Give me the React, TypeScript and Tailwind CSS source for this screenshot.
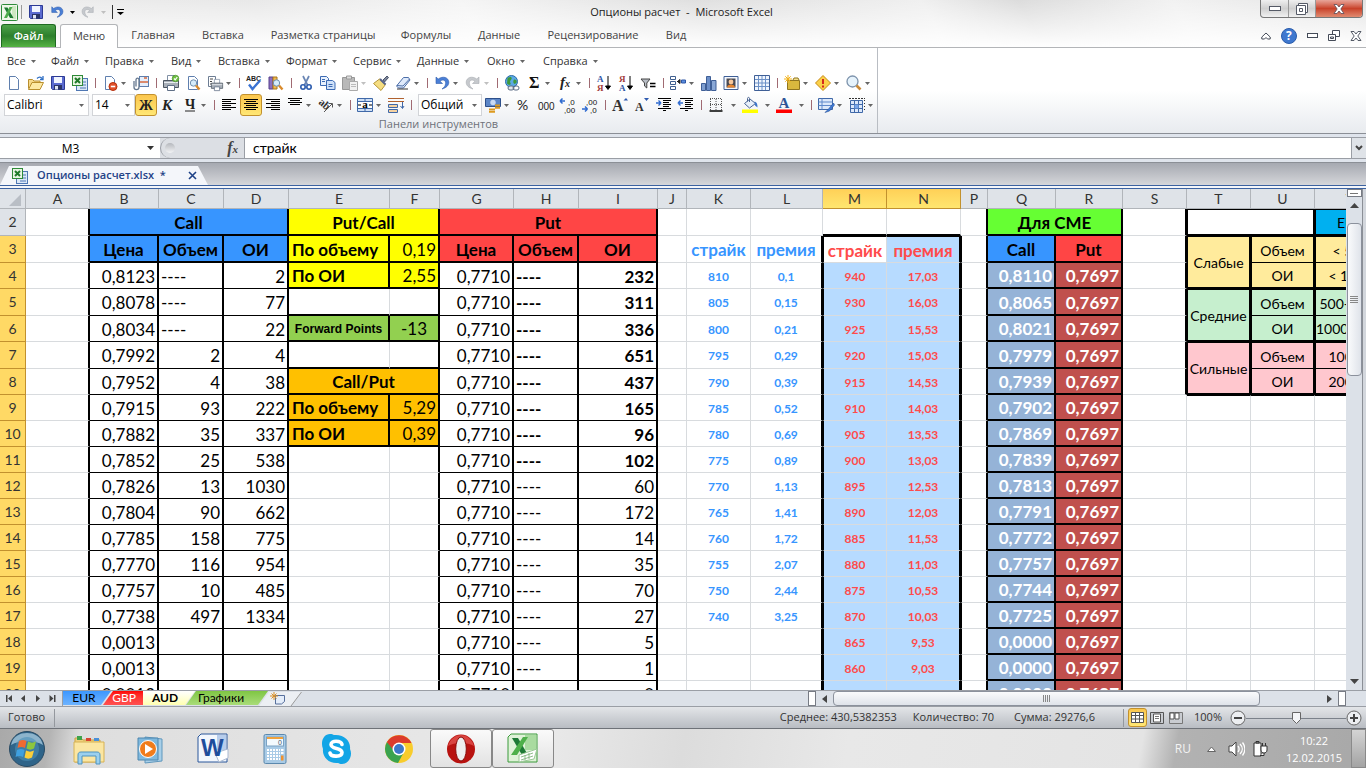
import React from 'react';
import clsx from 'clsx';

type Tool = {
  name?: string;
  arrow?: 'narrow' | 'wide';
  active?: boolean;
  sep?: boolean;
  faded?: boolean;
};

const doc = <path d="M3.5 1.5h6l3 3v10h-9z" fill="#fdfeff" stroke="#5f7fae" />;
const lens = (
  <>
    <circle cx="8.5" cy="8" r="3.2" fill="#d5ecfb" stroke="#6f8fae" />
    <path d="M11 10.5l3.5 4" stroke="#d98a2b" strokeWidth="2.4" />
  </>
);
const printer = (
  <>
    <path d="M4.5 6V.5h7V6" fill="#fff" stroke="#8090a5" />
    <path d="M.5 5.500h15v7H.5z" fill="#a9b0b8" stroke="#4d5661" />
    <path d="M1 7.500h14" stroke="#e9edf1" />
    <path d="M4.5 10.500h7v5h-7z" fill="#fff" stroke="#5f6f86" />
  </>
);
const excelMark = (
  <>
    <rect x="4.500" y="3.500" width="11" height="12" fill="#dbe8f8" stroke="#4f77b3" />
    <path d="M10 7h4M10 10h4M8 13h6" stroke="#4f77b3" />
    <rect x="0.500" y="0.500" width="10" height="10" fill="#e9f5e4" stroke="#2f8a38" />
    <path d="M3 3l5 5M8 3L3 8" stroke="#1f7a2a" strokeWidth="2" />
  </>
);
const floppy = (
  <>
    <path d="M1.500 1.500h13v13h-12l-1-1z" fill="#5b6bd0" stroke="#2c3a94" />
    <path d="M4 2h8v6H4z" fill="#f1f5ff" />
    <path d="M4 10h8v4.500H4z" fill="#2a3466" />
    <path d="M5 11h3v3.500H5z" fill="#dfe5f5" />
  </>
);
const undo = (
  <path d="M2 2v6.500h6.500L6 6.300C8.500 4 12 5 11.600 8.500c-.2 2.500-1.600 4-3.600 5.500 4-1 7-3.500 6.800-7C14.500 2.500 9 .5 4.200 4z" fill="#4a7fd6" stroke="#2f5cab" strokeWidth=".6" />
);
const redo = (
  <path d="M14 2v6.500H7.500L10 6.300C7.500 4 4 5 4.400 8.500c.2 2.500 1.600 4 3.600 5.500-4-1-7-3.500-6.800-7C1.500 2.500 7 .5 11.800 4z" fill="#c6c9cd" stroke="#a9adb2" strokeWidth=".6" />
);
const sheetLines = <path d="M1 4.500h14M1 8h14M1 11.500h14M4.500 1v14M8 1v14M11.500 1v14" stroke="#6d91c7" />;

const icons: Record<string, React.ReactNode> = {
  'Создать': doc,
  'Открыть': (
    <>
      <path d="M.5 13.500v-9h4l1.500 1.500h6v2" fill="#f6d98a" stroke="#b98f2e" />
      <path d="M.5 14.500l3.500-7h11.500l-3.500 7z" fill="#fde9a4" stroke="#b98f2e" />
      <path d="M9 3.500c2-2 4-1.500 5 0M15 1v3.500h-3" fill="none" stroke="#2f6fc4" strokeWidth="1.300" />
    </>
  ),
  'Сохранить': floppy,
  'Книга Excel': excelMark,
  'Удалить лист': (
    <>
      {doc}
      <circle cx="11" cy="11.500" r="4" fill="#e2512b" stroke="#b5300f" />
      <path d="M8.800 11.500h4.400" stroke="#fff" strokeWidth="1.600" />
    </>
  ),
  'Вложение': (
    <>
      <rect x="6.500" y="1.500" width="9" height="10" fill="#e5eefb" stroke="#5f7fae" />
      <path d="M7 7h8M11 3h3" stroke="#d86a3f" strokeWidth="1.500" />
      <path d="M1 6v6c0 3.500 5 3.500 5 0V5c0-2.500-3-2.500-3 0v6.500" fill="none" stroke="#66788f" strokeWidth="1.300" />
    </>
  ),
  'Быстрая печать': (
    <>
      {printer}
      <circle cx="12.500" cy="3.500" r="3.300" fill="#6fbe44" stroke="#3c8a1d" strokeWidth=".6" />
      <path d="M11 3.500l1.200 1.300L14.300 2" fill="none" stroke="#fff" strokeWidth="1.200" />
    </>
  ),
  'Предварительный просмотр': (
    <>
      {doc}
      {lens}
    </>
  ),
  'Параметры печати': (
    <>
      <path d="M1.500 1.500h7v10h-7z" fill="#fff" stroke="#6d7d93" />
      <path d="M3 4h3M3 6.500h2M3 9h2" stroke="#444" />
      <g transform="translate(4 4) scale(.75)">{printer}</g>
    </>
  ),
  'Орфография': (
    <>
      <text x="0" y="5.500" fontSize="7" fontWeight="bold" fontFamily="Liberation Sans, sans-serif" fill="#222">ABC</text>
      <path d="M3 9.500l3.500 4.500L14 5.500" fill="none" stroke="#3a72d2" strokeWidth="2.400" />
    </>
  ),
  'Справочники': (
    <>
      <path d="M1 2h4v12H1z" fill="#8c6fc0" stroke="#55408c" />
      <path d="M5 2h4v12H5z" fill="#f1b74b" stroke="#a8771c" />
      {lens}
    </>
  ),
  'Вырезать': (
    <>
      <path d="M5 1l4.500 9M11 1L6.500 10" stroke="#6a86b5" strokeWidth="1.700" />
      <circle cx="5" cy="12" r="2.200" fill="none" stroke="#2c5cae" strokeWidth="1.600" />
      <circle cx="11" cy="12" r="2.200" fill="none" stroke="#2c5cae" strokeWidth="1.600" />
    </>
  ),
  'Копировать': (
    <>
      <path d="M.5 1.500h6l2 2v7h-8z" fill="#e8f1fd" stroke="#3c6ab3" />
      <path d="M6.500 5.500h6l2.500 2v7H6.500z" fill="#cfe1f9" stroke="#3c6ab3" />
      <path d="M8.500 9.500h4M8.500 11.500h4M2 4.500h3M2 6.500h3" stroke="#3c6ab3" />
    </>
  ),
  'Вставить': (
    <>
      <path d="M.5 2.500h12v12H.5z" fill="#b9b9b9" stroke="#999" />
      <path d="M4.500 1h5v3h-5z" fill="#ddd" stroke="#999" />
      <path d="M7.500 6.500h8v9h-8z" fill="#f2f2f2" stroke="#aaa" />
      <path d="M9 9.500h5M9 11.500h5" stroke="#bbb" />
    </>
  ),
  'Формат по образцу': (
    <>
      <path d="M10 5l4-4 1.500 1.500-4 4.500z" fill="#7d869b" stroke="#4b546a" />
      <path d="M.5 8.500l6-4.500 6 5.500-4.500 6z" fill="#f5dd80" stroke="#b5953a" />
      <path d="M7 4l5.500 5.500" stroke="#57648a" strokeWidth="2" />
    </>
  ),
  'Очистить': (
    <>
      <path d="M1.500 11l7-8.500h5l1.500 2.500-6.500 8h-5z" fill="#dfeafb" stroke="#4c6ea8" />
      <path d="M2 14h11" stroke="#333" />
      <path d="M2 10.500l6 .5 6.500-7" fill="none" stroke="#4c6ea8" />
    </>
  ),
  'Отменить': undo,
  'Вернуть': redo,
  'Гиперссылка': (
    <>
      <circle cx="7.500" cy="6.500" r="6" fill="#5aa9e6" stroke="#2b6ca6" />
      <path d="M3.500 3c2.500-2 5-1 4 1s-2 2-1 4-2 2.500-3.500.500zM10 4.500c3-.5 3.500 3 1.500 4s-3-2-1.500-4z" fill="#3f9a3a" />
      <rect x="4" y="11" width="6" height="4" rx="2" fill="#dfe6ee" stroke="#5b6d85" />
      <rect x="9" y="11" width="6" height="4" rx="2" fill="none" stroke="#5b6d85" />
    </>
  ),
  'Автосумма': <text x="3" y="13" fontSize="16" fontWeight="bold" fontFamily="Liberation Serif, serif" fill="#111">Σ</text>,
  'Функция': (
    <text y="12" fontSize="15" fontStyle="italic" fontWeight="bold" fontFamily="Liberation Serif, serif" fill="#222">
      <tspan x="3">f</tspan>
      <tspan x="8" fontSize="10">x</tspan>
    </text>
  ),
  'Сортировка по возрастанию': (
    <>
      <text x="1" y="7" fontSize="9" fontWeight="bold" fontFamily="Liberation Serif, serif" fill="#2d55a5">А</text>
      <text x="1" y="15.500" fontSize="9" fontWeight="bold" fontFamily="Liberation Serif, serif" fill="#a23b3b">Я</text>
      <path d="M12 1v12M9.500 11l2.500 3.500 2.500-3.500z" stroke="#000" fill="#000" />
    </>
  ),
  'Сортировка по убыванию': (
    <>
      <text x="1" y="7" fontSize="9" fontWeight="bold" fontFamily="Liberation Serif, serif" fill="#a23b3b">Я</text>
      <text x="1" y="15.500" fontSize="9" fontWeight="bold" fontFamily="Liberation Serif, serif" fill="#2d55a5">А</text>
      <path d="M12 1v12M9.500 11l2.500 3.500 2.500-3.500z" stroke="#000" fill="#000" />
    </>
  ),
  'Фильтр': (
    <>
      <path d="M1 4h9L6.800 8v5L4.500 11V8z" fill="#b7bcc4" stroke="#444" />
      <path d="M10 8.500h5.500M10 11.500h5.500" stroke="#000" strokeWidth="1.600" />
    </>
  ),
  'Зависимости': (
    <>
      <path d="M.5 1.500h5v3h-5zM.5 6.500h5v3h-5zM.5 11.500h5v3h-5z" fill="#fff" stroke="#3f5f8f" />
      <path d="M7 6.500h3M10 4.500v4L7.500 6.500z" stroke="#222" fill="#222" />
      <path d="M11.500 5h4v3h-4z" fill="#5a8ede" stroke="#2d55a5" />
    </>
  ),
  'Диаграмма': (
    <>
      <path d="M.5 8.500h4v7h-4z" fill="#7f9fd0" stroke="#3f5f96" />
      <path d="M5.500 1.500h4v14h-4z" fill="#6c8fc8" stroke="#3f5f96" />
      <path d="M10.500 5.500h4.500v10h-4.500z" fill="#8aa8d6" stroke="#3f5f96" />
    </>
  ),
  'Рисунок': (
    <>
      <path d="M1 1.500h14v13H1z" fill="#f5f8fd" stroke="#3f5f96" />
      <path d="M3.500 3.500h9v9h-9z" fill="#4a4a52" />
      <circle cx="8" cy="7" r="2.400" fill="#f7c79b" />
      <path d="M4 12.500c0-4 8-4 8 0z" fill="#e8842c" />
    </>
  ),
  'Таблица': (
    <>
      <path d="M.5 .5h15v15H.5z" fill="#f1f6fd" stroke="#3f5f96" />
      {sheetLines}
    </>
  ),
  'Создать папку': (
    <>
      <path d="M3.500 5.500h12v9h-12z" fill="#d9b83e" stroke="#8f7520" />
      <path d="M9 5l1-2h4l1 2" fill="#f3e08b" stroke="#8f7520" />
      <path d="M4 0v8M0 4h8M1.300 1.300l5.400 5.400M6.700 1.300L1.300 6.700" stroke="#f2b21b" />
    </>
  ),
  'Ошибки': (
    <>
      <path d="M8 .5L15.500 8 8 15.500.5 8z" fill="#fbd14a" stroke="#c78913" />
      <path d="M8 4v5M8 10.500v2" stroke="#d42a1e" strokeWidth="2" />
    </>
  ),
  'Масштаб': (
    <>
      <circle cx="6.500" cy="6.500" r="5.500" fill="#e6f3fc" stroke="#7d93ac" strokeWidth="1.300" />
      <path d="M10.500 10.500l4 4" stroke="#c98b3a" strokeWidth="2.600" />
    </>
  ),
  'Полужирный': <text x="1" y="13" fontSize="14" fontWeight="bold" fontFamily="Liberation Serif, serif" fill="#222">Ж</text>,
  'Курсив': <text x="2" y="13" fontSize="15" fontWeight="bold" fontStyle="italic" fontFamily="Liberation Serif, serif" fill="#222">К</text>,
  'Подчеркнутый': (
    <>
      <text x="3" y="11.500" fontSize="14" fontWeight="bold" fontFamily="Liberation Serif, serif" fill="#222">Ч</text>
      <path d="M3 14h10" stroke="#222" />
    </>
  ),
  'По левому краю': <path d="M1 2.500h14M1 4.500h9M1 6.500h14M1 8.500h9M1 10.500h14M1 12.500h9" stroke="#000" />,
  'По центру': <path d="M1 2.500h14M3 4.500h10M1 6.500h14M3 8.500h10M1 10.500h14M3 12.500h10" stroke="#000" />,
  'По правому краю': <path d="M1 2.500h14M6 4.500h9M1 6.500h14M6 8.500h9M1 10.500h14M6 12.500h9" stroke="#000" />,
  'По верхнему краю': <path d="M1 1.500h14M3 3.500h10M1 5.500h14M3 7.500h10" stroke="#000" />,
  'Ориентация': (
    <>
      <text x="0" y="10" fontSize="11" fontWeight="bold" fontFamily="Liberation Serif, serif" fill="#333" transform="rotate(40 5 8)">ab</text>
      <path d="M6 15l8-8M14.500 6.500v4M14.500 6.500h-4" stroke="#555" fill="none" />
    </>
  ),
  'Объединить': (
    <>
      <path d="M.5 1.500h15v13H.5z" fill="#cfe0f6" stroke="#3f68a8" />
      <path d="M.5 4.500h15M.5 11.500h15M8 1.500v3M8 11.500v3" stroke="#3f68a8" />
      <path d="M1 5h14v6H1z" fill="#fff" />
      <text x="5.200" y="11" fontSize="11" fontWeight="bold" fontFamily="Liberation Serif, serif" fill="#000">a</text>
      <path d="M1 8h3M12 8h3" stroke="#000" />
    </>
  ),
  'Перенос текста': (
    <>
      <path d="M0 1.500h16M0 4.500h16" stroke="#b0612e" />
      <path d="M.5 7.500h9v3h-9zM.5 12.500h9v3h-9z" fill="#f5d2a2" stroke="#3f68a8" />
      <path d="M14.500 5v6M12.500 9l2 2.500 1.500-2.500" stroke="#3f68a8" fill="none" />
    </>
  ),
  'Денежный формат': (
    <>
      <path d="M.5 1.500h15v8H.5z" fill="#5c86c7" stroke="#2d4f8a" />
      <circle cx="8" cy="5.500" r="2.700" fill="#c8daf3" />
      <path d="M4 12.500h6M4 14.800h6M10 8.500h5M10 10.800h5" stroke="#dd9a1f" strokeWidth="1.800" />
    </>
  ),
  'Процентный формат': <text x="1" y="13" fontSize="14" fontFamily="Lato, sans-serif" fill="#222">%</text>,
  'Формат с разделителями': <text x="0" y="13" fontSize="10" fontFamily="Liberation Sans, sans-serif" fill="#222">000</text>,
  'Увеличить разрядность': (
    <>
      <path d="M0 4h5M0 4l2.500-2.500M0 4l2.500 2.500" stroke="#2f6bd0" strokeWidth="1.500" />
      <text x="8" y="7.500" fontSize="8" fontFamily="Liberation Sans, sans-serif" fill="#111">,0</text>
      <text x="4" y="15.500" fontSize="8" fontFamily="Liberation Sans, sans-serif" fill="#111">,00</text>
    </>
  ),
  'Уменьшить разрядность': (
    <>
      <text x="4" y="7.500" fontSize="8" fontFamily="Liberation Sans, sans-serif" fill="#111">,00</text>
      <path d="M0 12h5M5.500 12L3 9.500M5.500 12L3 14.500" stroke="#2f6bd0" strokeWidth="1.500" />
      <text x="8" y="15.500" fontSize="8" fontFamily="Liberation Sans, sans-serif" fill="#111">,0</text>
    </>
  ),
  'Увеличить шрифт': (
    <>
      <text x="0" y="14" fontSize="16" fontWeight="bold" fontFamily="Liberation Serif, serif" fill="#333">A</text>
      <path d="M11.500 3.500L14 1l2 2.500z" fill="#2f5bb0" />
    </>
  ),
  'Уменьшить шрифт': (
    <>
      <text x="1" y="14" fontSize="12" fontWeight="bold" fontFamily="Liberation Serif, serif" fill="#333">A</text>
      <path d="M10 1h5l-2.500 3z" fill="#2f5bb0" />
    </>
  ),
  'Увеличить отступ': (
    <>
      <path d="M2 1.500h13M7 3.500h8M7 5.500h6M7 7.500h8M7 9.500h6M2 11.500h13M7 13.500h3" stroke="#000" />
      <path d="M0 6h4M5 6L2.500 3.500M5 6L2.500 8.500" stroke="#2f6bd0" strokeWidth="1.400" />
    </>
  ),
  'Уменьшить отступ': (
    <>
      <path d="M2 1.500h13M7 3.500h8M7 5.500h6M7 7.500h8M7 9.500h6M2 11.500h13M7 13.500h3" stroke="#000" />
      <path d="M1 6h4M0 6l2.500-2.500M0 6l2.500 2.500" stroke="#2f6bd0" strokeWidth="1.400" />
    </>
  ),
  'Границы': (
    <>
      <path d="M2 1.500h12M2 7.500h12M2.500 2v11M8 2v11M13.500 2v11" stroke="#555" strokeDasharray="1 1" />
      <path d="M1.500 14h13" stroke="#000" strokeWidth="1.500" />
    </>
  ),
  'Цвет заливки': (
    <>
      <path d="M2.500 6.500L8 2l5.500 4.500-6 4.500z" fill="#e8f0fa" stroke="#4a6594" />
      <path d="M7.500 5V1.500c0-1.500-2-1.500-2 0v3" fill="none" stroke="#4a6594" />
      <path d="M12.500 4.500c2.500.5 3 3 3 6l-2.500-2z" fill="#3f76c9" />
      <path d="M0 12.500h16v3.500H0z" fill="#ff0" />
    </>
  ),
  'Цвет текста': (
    <>
      <text x="2.500" y="11" fontSize="15" fontWeight="bold" fontFamily="Liberation Serif, serif" fill="#2f5597">A</text>
      <path d="M0 12.500h16v3.500H0z" fill="#f00" />
    </>
  ),
  'Форматировать как таблицу': (
    <>
      <path d="M.5 1.500h14v11H.5z" fill="#dce8fa" stroke="#3f68a8" />
      <path d="M.5 5h14M.5 8.500h14M4 1.500v11" stroke="#5e89cb" />
      <path d="M15.500 6l-5 6-3.500 3.500 4.500-1.500 5-6z" fill="#3f7bd6" stroke="#27509a" strokeWidth=".6" />
    </>
  ),
  'Ячейки': (
    <>
      <path d="M1.500 3.500h12v12h-12z" fill="#dce8fa" stroke="#3f68a8" />
      <path d="M1.500 7.500h12M1.500 11.500h12M5.500 3.500v12M9.500 3.500v12" stroke="#3f68a8" />
      <path d="M5.500 7.500h4v4h-4z" fill="#7aa7ea" />
      <path d="M0 1.500h16" stroke="#333" strokeDasharray="2 1" />
      <path d="M15.500 3v11" stroke="#333" strokeDasharray="1 2" />
    </>
  ),
};

const standardTools: Tool[] = [
  { name: 'Создать' }, { name: 'Открыть' }, { name: 'Сохранить' }, { name: 'Книга Excel' }, { sep: true },
  { name: 'Удалить лист', arrow: 'narrow' }, { name: 'Вложение' }, { sep: true },
  { name: 'Быстрая печать' }, { name: 'Предварительный просмотр' }, { name: 'Параметры печати', arrow: 'narrow' }, { sep: true },
  { name: 'Орфография' }, { name: 'Справочники' }, { sep: true },
  { name: 'Вырезать' }, { name: 'Копировать' }, { name: 'Вставить', arrow: 'narrow', faded: true }, { name: 'Формат по образцу' },
  { name: 'Очистить', arrow: 'narrow' }, { sep: true },
  { name: 'Отменить', arrow: 'narrow' }, { name: 'Вернуть', arrow: 'narrow', faded: true }, { sep: true },
  { name: 'Гиперссылка' }, { name: 'Автосумма', arrow: 'narrow' }, { name: 'Функция', arrow: 'narrow' }, { sep: true },
  { name: 'Сортировка по возрастанию' }, { name: 'Сортировка по убыванию' }, { name: 'Фильтр' }, { sep: true },
  { name: 'Зависимости', arrow: 'narrow' }, { name: 'Диаграмма' }, { name: 'Рисунок', arrow: 'narrow' }, { name: 'Таблица' }, { sep: true },
  { name: 'Создать папку', arrow: 'narrow' }, { name: 'Ошибки', arrow: 'narrow' }, { name: 'Масштаб', arrow: 'narrow' },
];

const alignTools: Tool[] = [
  { name: 'Полужирный', active: true }, { name: 'Курсив' }, { name: 'Подчеркнутый', arrow: 'narrow' }, { sep: true },
  { name: 'По левому краю' }, { name: 'По центру', active: true }, { name: 'По правому краю' },
  { name: 'По верхнему краю', arrow: 'narrow' }, { name: 'Ориентация', arrow: 'narrow' }, { sep: true },
  { name: 'Объединить', arrow: 'narrow' }, { name: 'Перенос текста' }, { sep: true },
];

const numberTools: Tool[] = [
  { name: 'Денежный формат', arrow: 'narrow' }, { name: 'Процентный формат' }, { name: 'Формат с разделителями' },
  { name: 'Увеличить разрядность' }, { name: 'Уменьшить разрядность' }, { sep: true },
  { name: 'Увеличить шрифт' }, { name: 'Уменьшить шрифт' }, { name: 'Увеличить отступ' }, { name: 'Уменьшить отступ' }, { sep: true },
  { name: 'Границы', arrow: 'wide' }, { name: 'Цвет заливки', arrow: 'wide' }, { name: 'Цвет текста', arrow: 'wide' }, { sep: true },
  { name: 'Форматировать как таблицу', arrow: 'narrow' }, { name: 'Ячейки', arrow: 'narrow' },
];

const ribbonTabs = [
  { label: 'Главная', width: 'w-[70px]' },
  { label: 'Вставка', width: 'w-[70px]' },
  { label: 'Разметка страницы', width: 'w-[130px]' },
  { label: 'Формулы', width: 'w-[76px]' },
  { label: 'Данные', width: 'w-[70px]' },
  { label: 'Рецензирование', width: 'w-[118px]' },
  { label: 'Вид', width: 'w-[48px]' },
];

const menus = [
  { label: 'Все', width: 'w-[44px]' },
  { label: 'Файл', width: 'w-[54px]' },
  { label: 'Правка', width: 'w-[66px]' },
  { label: 'Вид', width: 'w-[47px]' },
  { label: 'Вставка', width: 'w-[68px]' },
  { label: 'Формат', width: 'w-[67px]' },
  { label: 'Сервис', width: 'w-[64px]' },
  { label: 'Данные', width: 'w-[70px]' },
  { label: 'Окно', width: 'w-[56px]' },
  { label: 'Справка', width: 'w-[64px]' },
];

const columns = [
  { name: 'A', width: 'w-[64px]' },
  { name: 'B', width: 'w-[69px]' },
  { name: 'C', width: 'w-[65px]' },
  { name: 'D', width: 'w-[65px]' },
  { name: 'E', width: 'w-[101px]' },
  { name: 'F', width: 'w-[50px]' },
  { name: 'G', width: 'w-[74px]' },
  { name: 'H', width: 'w-[65px]' },
  { name: 'I', width: 'w-[79px]' },
  { name: 'J', width: 'w-[29px]' },
  { name: 'K', width: 'w-[64px]' },
  { name: 'L', width: 'w-[72px]' },
  { name: 'M', width: 'w-[64px]', selected: true },
  { name: 'N', width: 'w-[74px]', selected: true },
  { name: 'P', width: 'w-[27px]' },
  { name: 'Q', width: 'w-[68px]' },
  { name: 'R', width: 'w-[67px]' },
  { name: 'S', width: 'w-[64px]' },
  { name: 'T', width: 'w-[64px]' },
  { name: 'U', width: 'w-[64px]' },
  { name: 'V', width: 'w-[72px]' },
];

// [row, B, C, D, I, K, L, M, N, Q]
const rows: [number, string, string, string, string, string, string, string, string, string][] = [
  [4, '0,8123', '----', '2', '232', '810', '0,1', '940', '17,03', '0,8110'],
  [5, '0,8078', '----', '77', '311', '805', '0,15', '930', '16,03', '0,8065'],
  [6, '0,8034', '----', '22', '336', '800', '0,21', '925', '15,53', '0,8021'],
  [7, '0,7992', '2', '4', '651', '795', '0,29', '920', '15,03', '0,7979'],
  [8, '0,7952', '4', '38', '437', '790', '0,39', '915', '14,53', '0,7939'],
  [9, '0,7915', '93', '222', '165', '785', '0,52', '910', '14,03', '0,7902'],
  [10, '0,7882', '35', '337', '96', '780', '0,69', '905', '13,53', '0,7869'],
  [11, '0,7852', '25', '538', '102', '775', '0,89', '900', '13,03', '0,7839'],
  [12, '0,7826', '13', '1030', '60', '770', '1,13', '895', '12,53', '0,7813'],
  [13, '0,7804', '90', '662', '172', '765', '1,41', '890', '12,03', '0,7791'],
  [14, '0,7785', '158', '775', '14', '760', '1,72', '885', '11,53', '0,7772'],
  [15, '0,7770', '116', '954', '35', '755', '2,07', '880', '11,03', '0,7757'],
  [16, '0,7757', '10', '485', '70', '750', '2,44', '875', '10,53', '0,7744'],
  [17, '0,7738', '497', '1334', '27', '740', '3,25', '870', '10,03', '0,7725'],
  [18, '0,0013', '', '', '5', '', '', '865', '9,53', '0,0000'],
  [19, '0,0013', '', '', '1', '', '', '860', '9,03', '0,0000'],
  [20, '0,0013', '', '', '0', '', '', '', '', '0,0000'],
];

const levels = [
  { title: 'Слабые', bg: 'bg-[#ffeb9c]', values: ['< 500', '< 1000'] },
  { title: 'Средние', bg: 'bg-[#c6efce]', values: ['500-1000', '1000-2000'] },
  { title: 'Сильные', bg: 'bg-[#ffc7ce]', values: ['1000 >', '2000 >'] },
];

const plain = 'border-r border-b border-[#d8dbde]';
const beforeTable = 'border-b border-r-2 border-b-[#d8dbde] border-r-black';
const boxed = 'border-r-2 border-b-2 border-black';
const figure = 'border-r-2 border-b border-black px-0.5';
const selected = 'bg-[#b7dbff] text-[#ff4b4b] text-center font-bold text-xs';

const Arrow = ({ faded }: { faded?: boolean }) => (
  <svg width="5" height="3" viewBox="0 0 5 3" className="shrink-0">
    <path d="M0 0h5L2.500 3z" fill={faded ? '#c0c0c0' : '#666'} />
  </svg>
);

const ToolRow = ({ tools }: { tools: Tool[] }) => (
  <>
    {tools.map((tool, i) =>
      tool.sep || !tool.name ? (
        <span key={i} className="flex w-2 shrink-0 justify-center">
          <span className="h-2.5 w-px bg-[#a06a72]" />
        </span>
      ) : (
        <button key={i} type="button" aria-label={tool.name} className="flex h-[22px] shrink-0 items-center">
          <span
            className={clsx(
              'flex h-[22px] w-[22px] items-center justify-center',
              tool.active && 'rounded-[3px] border border-[#c2912e] bg-gradient-to-b from-[#fbc64d] to-[#ffe774]',
            )}
          >
            <svg width="16" height="16" viewBox="0 0 16 16" fill="none" className="overflow-visible">{icons[tool.name]}</svg>
          </span>
          {tool.arrow && (
            <span className={clsx('flex items-center', tool.arrow === 'wide' ? 'w-3 justify-center' : 'w-[9px]')}>
              <Arrow faded={tool.faded} />
            </span>
          )}
        </button>
      ),
    )}
  </>
);

const Combo = ({ label, value, width }: { label: string; value: string; width: string }) => (
  <label className={clsx('relative flex h-[22px] shrink-0 items-center border border-[#d2d4d8] bg-white', width)}>
    <span className="sr-only">{label}</span>
    <select className="h-5 w-full appearance-none pl-0.5 text-xs leading-5 text-black" defaultValue={value}>
      <option>{value}</option>
    </select>
    <span className="pointer-events-none absolute right-1">
      <Arrow />
    </span>
  </label>
);

const ExcelLogo = () => (
  <svg width="17" height="17" viewBox="0 0 17 17">
    <rect x=".5" y=".5" width="16" height="16" rx="1" fill="#eef8e9" stroke="#2e8b3a" />
    <path d="M11 2h4v13h-4z" fill="#cfe8c4" />
    <path d="M3 3.500h3.500L12.500 14H9z" fill="#1d7a33" />
    <path d="M11.500 3h-3L3 14h3z" fill="#4dac4b" />
  </svg>
);

const TitleBar = () => (
  <header className="flex h-6 shrink-0 items-start">
    <div className="flex h-6 flex-1 items-center">
      <span className="ml-px"><ExcelLogo /></span>
      <span className="ml-[3px] h-3.5 w-px bg-[#9a9a9a]" />
      <button type="button" aria-label="Сохранить" className="ml-1.5">
        <svg width="16" height="16" viewBox="0 0 16 16">{floppy}</svg>
      </button>
      <button type="button" aria-label="Отменить" className="ml-1.5 flex items-center gap-1.5">
        <svg width="14" height="14" viewBox="0 0 16 16">{undo}</svg>
        <svg width="5" height="3" viewBox="0 0 5 3"><path d="M0 0h5L2.500 3z" /></svg>
      </button>
      <button type="button" aria-label="Вернуть" className="ml-1.5 flex items-center gap-1.5">
        <svg width="14" height="14" viewBox="0 0 16 16">{redo}</svg>
        <Arrow faded />
      </button>
      <span className="ml-1.5 h-3.5 w-px bg-[#333]" />
      <button type="button" aria-label="Настройка панели" className="ml-1">
        <svg width="7" height="6" viewBox="0 0 7 6"><path d="M0 0h7v1H0zM0 3h7L3.500 6z" /></svg>
      </button>
    </div>
    <h1 className="flex h-6 items-center text-[11px] whitespace-pre text-[#222]">{'Опционы расчет  -  Microsoft Excel'}</h1>
    <div className="flex flex-1 justify-end pr-[3px]">
      <div className="flex h-[18px] overflow-hidden rounded-b-[4px] border border-t-0 border-[#777] bg-gradient-to-b from-[#efefef] via-[#cfcfcf] to-[#f1f1f1]">
        <button type="button" aria-label="Свернуть" className="flex w-7 items-center justify-center border-r border-[#999]">
          <svg width="12" height="5" viewBox="0 0 12 5"><rect x=".5" y=".5" width="11" height="4" fill="#fff" stroke="#555a66" /></svg>
        </button>
        <button type="button" aria-label="Свернуть в окно" className="flex w-[27px] items-center justify-center border-r border-[#999]">
          <svg width="12" height="12" viewBox="0 0 12 12" fill="#fff" stroke="#555a66">
            <path d="M2.500 .5h9v9h-9z" />
            <path d="M.5 2.500h9v9h-9z" />
            <path d="M3.500 5.500h3v3h-3z" />
          </svg>
        </button>
        <button type="button" aria-label="Закрыть" className="flex w-[46px] items-center justify-center bg-gradient-to-b from-[#e7a59a] via-[#c8412a] to-[#e08a70]">
          <svg width="12" height="10" viewBox="0 0 12 10">
            <path d="M1 .5h3L6 3 8 .5h3L7.800 5 11 9.500H8L6 7 4 9.500H1L4.200 5z" fill="#fff" stroke="#5b4a55" strokeWidth=".8" />
          </svg>
        </button>
      </div>
    </div>
  </header>
);

const RibbonTabs = () => (
  <nav className="flex h-6 shrink-0 items-end border-b border-[#b3b5b8] text-[11px] text-[#444]">
    <button type="button" className="ml-px h-[23px] w-[55px] rounded-t-[3px] border border-b-0 border-[#1f6a22] bg-gradient-to-b from-[#4da34a] via-[#2c7f2c] to-[#55b344] font-semibold text-white">
      Файл
    </button>
    <button type="button" className="-mb-px ml-[4px] h-6 w-[58px] rounded-t-[3px] border border-b-0 border-[#b3b5b8] bg-white">Меню</button>
    {ribbonTabs.map(tab => (
      <button key={tab.label} type="button" className={clsx('h-[23px] shrink-0 whitespace-nowrap', tab.width)}>{tab.label}</button>
    ))}
    <div className="ml-auto flex h-[23px] items-center gap-2.5 pr-1">
      <button type="button" aria-label="Свернуть ленту">
        <svg width="10" height="8" viewBox="0 0 10 8"><path d="M.8 5L5 1l4.200 4v2H6.500L5 5.500 3.500 7H.8z" fill="#fff" stroke="#444b58" /></svg>
      </button>
      <button type="button" aria-label="Справка">
        <svg width="16" height="16" viewBox="0 0 16 16" className="overflow-visible">
          <circle cx="8" cy="8" r="7.500" fill="#3f78cf" stroke="#2a5cab" />
          <text x="5" y="12" fontSize="12" fontWeight="bold" fontFamily="Open Sans, sans-serif" fill="#fff">?</text>
        </svg>
      </button>
      <button type="button" aria-label="Свернуть книгу">
        <svg width="11" height="5" viewBox="0 0 11 5"><rect x=".5" y=".5" width="10" height="4" fill="#fff" stroke="#444b58" /></svg>
      </button>
      <button type="button" aria-label="Восстановить книгу">
        <svg width="12" height="11" viewBox="0 0 12 11" fill="#fff" stroke="#444b58">
          <path d="M4.500 .5h7v6h-7z" />
          <path d="M.5 4.500h7v6h-7z" />
          <path d="M2.500 7h3v1.500h-3z" />
        </svg>
      </button>
      <button type="button" aria-label="Закрыть книгу">
        <svg width="12" height="10" viewBox="0 0 12 10">
          <path d="M1 .5h3L6 3 8 .5h3L7.800 5 11 9.500H8L6 7 4 9.500H1L4.200 5z" fill="#fff" stroke="#444b58" strokeWidth=".9" />
        </svg>
      </button>
    </div>
  </nav>
);

const Ribbon = () => (
  <section className="flex h-[86px] shrink-0 border-b border-[#8b8f96] bg-gradient-to-b from-white via-white to-[#e8ebef]">
    <div className="flex w-[878px] shrink-0 flex-col border-r border-[#b9bdc3]">
      <div className="flex h-6 items-center pt-0.5 pl-[7px] text-[11px] text-[#333]">
        {menus.map((menu, i) => (
          <button key={i} type="button" className={clsx('flex shrink-0 items-center gap-[5px]', menu.width)}>
            {menu.label}
            <Arrow />
          </button>
        ))}
      </div>
      <div className="flex h-[22px] items-center pl-[3px]">
        <ToolRow tools={standardTools} />
      </div>
      <div className="flex h-[22px] items-center pl-1">
        <Combo label="Шрифт" value="Calibri" width="w-[85px]" />
        <span className="w-[3px]" />
        <Combo label="Размер шрифта" value="14" width="w-[43px]" />
        <ToolRow tools={alignTools} />
        <span className="w-[3px]" />
        <Combo label="Числовой формат" value="Общий" width="w-[64px]" />
        <ToolRow tools={numberTools} />
      </div>
      <div className="flex h-[17px] items-center justify-center text-[11px] text-[#6d7179]">Панели инструментов</div>
    </div>
  </section>
);

const FormulaBar = () => (
  <section className="flex h-[29px] shrink-0 flex-col border-b border-[#8b8f96] bg-[#dfe4ec] pt-[3px]">
    <div className="flex h-[22px] border-y border-[#9a9ea5] bg-[#dcdfe4]">
      <label className="relative flex w-[160px] shrink-0 items-center bg-white">
        <span className="sr-only">Имя</span>
        <input className="h-5 w-[141px] text-center text-xs text-black" defaultValue="M3" />
        <svg width="7" height="4" viewBox="0 0 7 4" className="ml-1.5"><path d="M0 0h7L3.500 4z" fill="#333" /></svg>
      </label>
      <div className="flex w-[85px] shrink-0 items-center justify-between rounded-l-full border-r border-l border-[#9a9ea5] pr-1.5 pl-1">
        <span className="h-2.5 w-2.5 rounded-full bg-gradient-to-b from-[#b5b8bd] to-[#f3f4f6]" />
        <button type="button" className="font-['Liberation_Serif',serif] text-base leading-5 font-bold text-[#444] italic">
          f<span className="text-[11px]">x</span>
        </button>
      </div>
      <input aria-label="Строка формул" className="h-5 min-w-0 flex-1 bg-white pl-2 font-[Lato,sans-serif] text-sm text-black" defaultValue="страйк" />
      <button type="button" aria-label="Развернуть строку формул" className="flex w-[15px] items-center justify-center border-l border-[#9a9ea5] bg-[#dfe3e8]">
        <svg width="8" height="6" viewBox="0 0 8 6"><path d="M1 1l3 3 3-3" fill="none" stroke="#444" strokeWidth="2" /></svg>
      </button>
    </div>
  </section>
);

const BookTabs = () => (
  <section className="flex h-[26px] shrink-0 items-end border-b border-[#3c62a0] bg-gradient-to-b from-[#a6a9b1] to-[#dcdde0]">
    <div className="flex w-full flex-col">
      <div className="flex h-[19px] w-[208px] items-center bg-[#f4f6fa] pl-3 [clip-path:polygon(9px_0,198px_0,208px_100%,0_100%)]">
        <svg width="16" height="16" viewBox="0 0 16 16">{excelMark}</svg>
        <span className="ml-[9px] text-[11px] font-semibold whitespace-pre text-[#1f4287]">{'Опционы расчет.xlsx  *'}</span>
        <button type="button" aria-label="Закрыть вкладку" className="mr-[11px] ml-auto">
          <svg width="9" height="9" viewBox="0 0 9 9"><path d="M1 1l7 7M8 1L1 8" stroke="#1f4287" strokeWidth="1.600" /></svg>
        </button>
      </div>
      <div className="h-[3px] border-t border-[#3c62a0] bg-[#f4f6fa]" />
    </div>
  </section>
);

const rowHead = (n: number) =>
  clsx(
    'border-r border-b text-center font-normal text-sm text-[#333]',
    n === 2 ? 'border-[#b1b5ba] bg-[#dfe3e8]' : 'border-[#c2912e] bg-[#ffd965]',
  );

// E and F hold a few small blocks, every other row is empty
const RatioCells = ({ n }: { n: number }) => {
  if (n === 4 || n === 9 || n === 10) {
    const bg = n === 4 ? 'bg-[#ff0]' : 'bg-[#ffc000]';
    return (
      <>
        <td className={clsx(boxed, bg, 'pl-[3px] font-bold')}>{n === 9 ? 'По объему' : 'По ОИ'}</td>
        <td className={clsx(boxed, bg, 'pr-0.5 text-right')}>{n === 4 ? '2,55' : n === 9 ? '5,29' : '0,39'}</td>
      </>
    );
  }
  if (n === 6) {
    return (
      <>
        <td className={clsx(boxed, "bg-[#92d050] text-center font-['Liberation_Sans',sans-serif] text-xs font-bold")}>Forward Points</td>
        <td className={clsx(boxed, 'bg-[#92d050] text-center')}>-13</td>
      </>
    );
  }
  if (n === 8) return <td colSpan={2} className={clsx(boxed, 'bg-[#ffc000] text-center font-bold')}>Call/Put</td>;
  const bottom = n === 5 || n === 7 ? 'border-b-2 border-b-black' : 'border-b border-b-[#d8dbde]';
  return (
    <>
      <td className={clsx('border-r border-r-[#d8dbde]', bottom)} />
      <td className={clsx('border-r-2 border-r-black', bottom)} />
    </>
  );
};

const LevelCells = ({ n }: { n: number }) => {
  if (n > 8) {
    const cell = clsx(plain, n === 9 && 'border-t border-t-black');
    return (
      <>
        <td className={cell} />
        <td className={cell} />
        <td className={cell} />
      </>
    );
  }
  const level = levels[Math.floor((n - 3) / 2)];
  const first = n % 2 === 1;
  const base = clsx(level.bg, 'border-r-2 border-l border-black text-center text-sm font-normal whitespace-nowrap');
  const cell = clsx(base, 'px-0', first ? 'border-t border-b' : 'border-b-2');
  return (
    <>
      {first && <td rowSpan={2} className={clsx(base, 'border-t border-b-2 px-0')}>{level.title}</td>}
      <td className={cell}>{first ? 'Объем' : 'ОИ'}</td>
      <td className={cell}>{level.values[first ? 0 : 1]}</td>
    </>
  );
};

const Sheet = () => (
  <table className="w-[1387px] table-fixed border-separate border-spacing-0 font-[Lato,sans-serif] text-[17px] leading-5 text-black [&_td]:overflow-hidden [&_td]:pt-0.5 [&_td]:pb-0">
    <colgroup>
      <col className="w-[26px]" />
      {columns.map(col => <col key={col.name} className={col.width} />)}
    </colgroup>
    <thead>
      <tr className="h-5">
        <th className="border-r border-b border-[#b1b5ba] bg-[#dfe3e8] p-0">
          <svg width="12" height="12" viewBox="0 0 12 12" className="mt-0.5 mr-1 ml-auto"><path d="M12 0v12H0z" fill="#b9bec5" /></svg>
        </th>
        {columns.map(col => (
          <th
            key={col.name}
            className={clsx(
              'border-r border-b p-0 text-sm leading-4 font-normal text-[#333]',
              col.selected ? 'border-[#c2912e] bg-gradient-to-b from-[#ffd057] to-[#ffe66f]' : 'border-[#b1b5ba] bg-[#dfe3e8]',
            )}
          >
            {col.name}
          </th>
        ))}
      </tr>
    </thead>
    <tbody>
      <tr className="h-[27px] text-center font-bold">
        <th className={rowHead(2)}>2</th>
        <td className={beforeTable} />
        <td colSpan={3} className={clsx(boxed, 'bg-[#3795ff]')}>Call</td>
        <td colSpan={2} className={clsx(boxed, 'bg-[#ff0]')}>Put/Call</td>
        <td colSpan={3} className={clsx(boxed, 'bg-[#ff4545]')}>Put</td>
        <td className={plain} />
        <td className={plain} />
        <td className={plain} />
        <td className="border-r border-b-2 border-r-[#d8dbde] border-b-black" />
        <td className="border-r border-b-2 border-r-[#d8dbde] border-b-black" />
        <td className={beforeTable} />
        <td colSpan={2} className={clsx(boxed, 'bg-[#66ff33]')}>Для CME</td>
        <td className={beforeTable} />
        <td colSpan={2} className="border-t border-r-2 border-b-2 border-l border-black bg-white" />
        <td className="border-t border-r-2 border-b-2 border-l border-black bg-[#00b0f0] text-sm font-normal">EUR</td>
      </tr>
      <tr className="h-[27px] text-center font-bold">
        <th className={rowHead(3)}>3</th>
        <td className={beforeTable} />
        <td className={clsx(boxed, 'bg-[#3795ff]')}>Цена</td>
        <td className={clsx(boxed, 'bg-[#3795ff] px-0')}>Объем</td>
        <td className={clsx(boxed, 'bg-[#3795ff]')}>ОИ</td>
        <td className={clsx(boxed, 'bg-[#ff0] pl-[3px] text-left whitespace-nowrap')}>По объему</td>
        <td className={clsx(boxed, 'bg-[#ff0] pr-0.5 text-right font-normal')}>0,19</td>
        <td className={clsx(boxed, 'bg-[#ff4545]')}>Цена</td>
        <td className={clsx(boxed, 'bg-[#ff4545] px-0')}>Объем</td>
        <td className={clsx(boxed, 'bg-[#ff4545]')}>ОИ</td>
        <td className={plain} />
        <td className={clsx(plain, 'px-0 text-[#3795ff]')}>страйк</td>
        <td className="border-r-2 border-b border-r-black border-b-[#d8dbde] px-0 text-[#3795ff]">премия</td>
        <td className="border-t border-r border-b border-l border-t-black border-r-[#d8dbde] border-b-[#d8dbde] border-l-black px-0 text-[#ff4b4b]">страйк</td>
        <td className="border-t border-r-2 border-b border-t-black border-r-black border-b-[#d8dbde] bg-[#b7dbff] px-0 text-[#ff4b4b]">премия</td>
        <td className={clsx(beforeTable, 'border-l border-l-black')} />
        <td className={clsx(boxed, 'bg-[#3795ff]')}>Call</td>
        <td className={clsx(boxed, 'bg-[#ff4545]')}>Put</td>
        <td className={beforeTable} />
        <LevelCells n={3} />
      </tr>
      {rows.map(([n, b, c, d, oi, k, l, m, prem, q]) => (
        <tr key={n} className={n === 5 || n === 7 ? 'h-[27px]' : 'h-[26px]'}>
          <th className={rowHead(n)}>{n}</th>
          <td className={beforeTable} />
          <td className={clsx(figure, 'text-right')}>{b}</td>
          <td className={clsx(figure, c === '----' ? 'text-left' : 'text-right')}>{c}</td>
          <td className={clsx(figure, 'text-right')}>{d}</td>
          <RatioCells n={n} />
          <td className={clsx(figure, 'text-right')}>0,7710</td>
          <td className={clsx(figure, n < 12 && 'font-bold')}>----</td>
          <td className={clsx(figure, 'text-right', n < 12 && 'font-bold')}>{oi}</td>
          <td className={plain} />
          <td className={clsx(plain, 'text-center text-xs font-bold text-[#3795ff]')}>{k}</td>
          <td className="border-r-2 border-b border-r-black border-b-[#d8dbde] text-center text-xs font-bold text-[#3795ff]">{l}</td>
          <td className={clsx(selected, 'border-r border-b border-l border-r-[#d8dbde] border-b-[#d8dbde] border-l-black')}>{m}</td>
          <td className={clsx(selected, 'border-r-2 border-b border-r-black border-b-[#d8dbde]')}>{prem}</td>
          <td className={clsx(beforeTable, 'border-l border-l-black')} />
          <td className={clsx(boxed, 'bg-[#95b3d7] pr-0.5 pl-0 text-right font-bold text-white')}>{q}</td>
          <td className={clsx(boxed, 'bg-[#c0504d] pr-0.5 pl-0 text-right font-bold text-white')}>0,7697</td>
          <td className={n < 9 ? beforeTable : plain} />
          <LevelCells n={n} />
        </tr>
      ))}
    </tbody>
  </table>
);

const VerticalScroll = () => (
  <div className="flex w-5 shrink-0 border-r-[3px] border-[#d3d7dd] bg-[#dce1e8]">
    <div className="flex w-full flex-col items-center border-r border-[#8b8f96]">
      <span className="flex h-2 w-[15px] items-center justify-center border border-[#777b84] bg-white">
        <span className="h-px w-2 bg-[#777]" />
      </span>
      <button type="button" aria-label="Вверх" className="flex h-[26px] w-full items-start justify-center pt-1.5">
        <svg width="9" height="5" viewBox="0 0 9 5"><path d="M0 5h9L4.500 0z" fill="#444" /></svg>
      </button>
      <div className="flex h-[153px] w-[15px] flex-col items-center justify-center gap-px rounded-sm border border-[#8b919c] bg-gradient-to-r from-[#fafbfc] to-[#dfe3ea]">
        <span className="h-px w-2 bg-[#888]" />
        <span className="h-px w-2 bg-[#888]" />
        <span className="h-px w-2 bg-[#888]" />
        <span className="h-px w-2 bg-[#888]" />
      </div>
      <button type="button" aria-label="Вниз" className="mt-auto flex h-[18px] w-full items-center justify-center">
        <svg width="9" height="5" viewBox="0 0 9 5"><path d="M0 0h9L4.500 5z" fill="#444" /></svg>
      </button>
    </div>
  </div>
);

const SheetTabs = () => (
  <section className="flex h-[17px] shrink-0 border-t border-b border-[#9a9ea5] bg-[#dce1e8] font-[Lato,sans-serif] text-xs leading-[14px]">
    <div className="flex w-[63px] shrink-0 items-center justify-between border-r border-[#9a9ea5] pr-1.5 pl-1.5">
      {[
        { label: 'Первый лист', d: 'M0 0h1.500v7H0zM6 0v7L2 3.500z' },
        { label: 'Предыдущий лист', d: 'M5 0v7L1 3.500z' },
        { label: 'Следующий лист', d: 'M1 0v7l4-3.500z' },
        { label: 'Последний лист', d: 'M5 0h1.500v7H5zM.5 0v7l4-3.500z' },
      ].map(nav => (
        <button key={nav.label} type="button" aria-label={nav.label}>
          <svg width="7" height="7" viewBox="0 0 7 7"><path d={nav.d} fill="#444" /></svg>
        </button>
      ))}
    </div>
    <button type="button" className="h-3.5 w-[48px] shrink-0 bg-gradient-to-b from-[#3b97ff] to-[#6db3ff] pr-1.5 text-black [clip-path:polygon(0_0,100%_0,38px_100%,0_100%)]">EUR</button>
    <button type="button" className="-ml-[8px] h-3.5 w-[40px] shrink-0 bg-gradient-to-b from-[#ff0000] to-[#ff5050] pl-0.5 text-white [clip-path:polygon(10px_0,100%_0,100%_100%,0_100%)]">GBP</button>
    <button type="button" className="h-3.5 w-[52px] shrink-0 bg-gradient-to-b from-white to-[#ffffb0] pr-2 font-bold text-black [clip-path:polygon(0_0,100%_0,42px_100%,0_100%)]">AUD</button>
    <button type="button" className="-ml-[9px] h-3.5 w-[82px] shrink-0 bg-gradient-to-b from-[#7fc642] to-[#a9dc78] pr-3 text-black [clip-path:polygon(10px_0,100%_0,72px_100%,0_100%)]">Графики</button>
    <button type="button" aria-label="Вставить лист" className="-ml-[9px] shrink-0">
      <svg width="43" height="14" viewBox="0 0 43 14">
        <path d="M10 0h33L32 14H0z" fill="#eceff3" />
        <path d="M32 14L42.500 0" stroke="#999" />
        <path d="M16.500 3.500h9v6l-3 2.500h-6z" fill="#e4edfa" stroke="#566f9c" />
        <path d="M15 0v8M11 4h8M12.500 1.500l5 5M17.500 1.500l-5 5" stroke="#d9912a" />
      </svg>
    </button>
    <div className="min-w-0 flex-1" />
    <span className="h-[15px] w-2 shrink-0 border border-[#777b84] bg-white" />
    <div className="flex h-[15px] w-[522px] shrink-0 items-center">
      <button type="button" aria-label="Влево" className="flex w-[17px] justify-center">
        <svg width="5" height="8" viewBox="0 0 5 8"><path d="M5 0v8L0 4z" fill="#444" /></svg>
      </button>
      <div className="flex h-[15px] w-[427px] items-center justify-center gap-px rounded-sm border border-[#8b919c] bg-gradient-to-b from-[#fafbfc] to-[#dfe3ea]">
        <span className="h-[7px] w-px bg-[#888]" />
        <span className="h-[7px] w-px bg-[#888]" />
        <span className="h-[7px] w-px bg-[#888]" />
        <span className="h-[7px] w-px bg-[#888]" />
      </div>
      <button type="button" aria-label="Вправо" className="mr-1.5 ml-auto">
        <svg width="5" height="8" viewBox="0 0 5 8"><path d="M0 0v8l5-4z" fill="#444" /></svg>
      </button>
    </div>
    <span className="mr-5 h-[15px] w-2 shrink-0 border border-[#777b84] bg-white" />
  </section>
);

const StatusBar = () => (
  <footer className="flex h-[22px] shrink-0 items-center border-b border-[#6e7278] bg-gradient-to-b from-[#e3e5e8] to-[#b9bdc3] text-[11px] text-[#333]">
    <span className="w-[54px] pl-2">Готово</span>
    <span className="h-[18px] w-px bg-[#94989e]" />
    <div className="ml-auto flex items-center gap-4">
      <span>Среднее: 430,5382353</span>
      <span>Количество: 70</span>
      <span className="ml-1">Сумма: 29276,6</span>
    </div>
    <span className="ml-7 h-[18px] w-px bg-[#94989e]" />
    <button type="button" aria-label="Обычный" className="ml-1 flex h-[19px] w-[19px] items-center justify-center rounded-[3px] border border-[#c2912e] bg-gradient-to-b from-[#fbc64d] to-[#ffe774]">
      <svg width="13" height="11" viewBox="0 0 13 11"><path d="M.5 .5h12v10H.5zM.5 3.500h12M.5 7h12M4.500 .5v10M8.500 .5v10" fill="#fff" stroke="#555" /></svg>
    </button>
    <button type="button" aria-label="Разметка страницы" className="ml-[3px]">
      <svg width="14" height="12" viewBox="0 0 14 12"><path d="M.5 .5h13v11H.5z" fill="#c9ccd1" stroke="#555" /><path d="M3.500 2h7v8h-7z" fill="#fff" stroke="#555" /><path d="M5 4.500h4M5 6.500h4" stroke="#777" /></svg>
    </button>
    <button type="button" aria-label="Страничный режим" className="ml-[5px]">
      <svg width="14" height="12" viewBox="0 0 14 12"><path d="M.5 .5h13v11H.5z" fill="#c9ccd1" stroke="#777" /><path d="M1 1h4v6H1zM6 1h4v6H6z" fill="#fff" stroke="#555" /></svg>
    </button>
    <span className="ml-[7px] w-9 text-center">100%</span>
    <button type="button" aria-label="Уменьшить" className="ml-1">
      <svg width="16" height="16" viewBox="0 0 16 16"><circle cx="8" cy="8" r="7" fill="#eceef1" stroke="#666" /><path d="M4 8h8" stroke="#444" strokeWidth="2" /></svg>
    </button>
    <svg width="100" height="14" viewBox="0 0 100 14">
      <path d="M0 7.500h100" stroke="#7b818a" />
      <path d="M46.500 1.500h8v7l-4 4-4-4z" fill="#f4f5f7" stroke="#666" />
    </svg>
    <button type="button" aria-label="Увеличить" className="mr-1">
      <svg width="16" height="16" viewBox="0 0 16 16"><circle cx="8" cy="8" r="7" fill="#eceef1" stroke="#666" /><path d="M4 8h8M8 4v8" stroke="#444" strokeWidth="2" /></svg>
    </button>
  </footer>
);

const taskIcons: { name: string; framed?: boolean; icon: React.ReactNode }[] = [
  {
    name: 'Проводник',
    icon: (
      <>
        <path d="M2 5h6l2 2h17v22H2z" fill="#f0d07c" stroke="#c9a344" />
        <path d="M4 3h5v4H4z" fill="#3fa34b" /><path d="M13 5h5v3h-5z" fill="#d9442f" /><path d="M21 5h5v3h-5z" fill="#4a90d9" />
        <path d="M1 9h30v20H1z" fill="#fbe6a2" stroke="#d6b255" />
        <path d="M5 31V22c0-2 1-3 3-3h16c2 0 3 1 3 3v9h-4v-8H9v8z" fill="#9bd0ee" stroke="#4d93bf" />
      </>
    ),
  },
  {
    name: 'Проигрыватель',
    icon: (
      <>
        <path d="M10 4l17 2v22l-17 2z" fill="#a8cfe8" stroke="#5f97bd" />
        <path d="M3 5h20v22H3z" fill="#7fb9de" stroke="#4d86ae" />
        <circle cx="13" cy="16" r="8.500" fill="#f07c1b" stroke="#fff" />
        <path d="M10 11l8 5-8 5z" fill="#fff" />
      </>
    ),
  },
  {
    name: 'Word',
    icon: (
      <>
        <path d="M4 1h26v28H1V4z" fill="#f3f7fd" stroke="#2b579a" />
        <path d="M20 2h9v15h-9z" fill="#b7cdec" />
        <path d="M18 20l13-4v9l-9 4z" fill="#fff" stroke="#a9b9d1" />
        <text x="4" y="23" fontSize="24" fontWeight="bold" fontFamily="Liberation Sans, sans-serif" fill="#1f4e9c">W</text>
      </>
    ),
  },
  {
    name: 'Калькулятор',
    icon: (
      <>
        <rect x="5" y="1.500" width="22" height="29" rx="1.500" fill="#a9cbe6" stroke="#5b88ad" />
        <rect x="7.500" y="4" width="17" height="9" fill="#f4fafe" stroke="#7aa2c3" />
        <path d="M8 4h16v2H8z" fill="#f0a23c" />
        <text x="19" y="12" fontSize="7" fontFamily="Liberation Sans, sans-serif" fill="#456">0</text>
        <path d="M8 17h13M8 20h13M8 23h13M8 26h13" stroke="#fff" strokeWidth="2" strokeDasharray="2 1" />
        <path d="M22 17h2.500M22 20h2.500" stroke="#fff" strokeWidth="2" />
        <path d="M22 25h2.500" stroke="#f0912c" strokeWidth="5" />
      </>
    ),
  },
  {
    name: 'Skype',
    icon: (
      <>
        <path d="M9 1c2 0 3 .5 4 1 10-1 17 6 16 14 3 6-1 15-8 15-2 0-3-.5-4-1C8 31 1 24 2 16-1 8 3 1 9 1z" fill="#12a5e6" />
        <path d="M21 11.500c-1-4-11-4.500-11 0 0 5 11 3 11 8 0 4.500-11 5-12 .5" fill="none" stroke="#fff" strokeWidth="3.600" strokeLinecap="round" />
      </>
    ),
  },
  {
    name: 'Chrome',
    icon: (
      <>
        <circle cx="16" cy="16" r="14" fill="#f8cc2c" />
        <path d="M16 16L3.900 9A14 14 0 0 0 15 30l6-11z" fill="#3aa34f" />
        <path d="M16 16H9.500L3.900 9A14 14 0 0 1 28.500 10H16z" fill="#dc3b2c" />
        <circle cx="16" cy="16" r="6.500" fill="#fff" /><circle cx="16" cy="16" r="5" fill="#3d78c9" />
      </>
    ),
  },
  {
    name: 'Opera',
    framed: true,
    icon: (
      <>
        <ellipse cx="16" cy="16" rx="14" ry="14.500" fill="#b8120f" />
        <path d="M3 13C5 5 12 2 16 2s11 3 13 11c-6-4-20-4-26 0z" fill="#d94440" />
        <ellipse cx="16" cy="16" rx="5.300" ry="12" fill="#eee" stroke="#8a0d0b" />
      </>
    ),
  },
  {
    name: 'Excel',
    framed: true,
    icon: (
      <>
        <path d="M4 1h26v28H1V4z" fill="#dff2d8" stroke="#3a9a3a" />
        <path d="M18 2h11v15H18z" fill="#a9dba0" />
        <path d="M5 5h6l10 17h-6z" fill="#1e7a36" /><path d="M16 4h5L10 22H4z" fill="#4eb04a" />
        <path d="M12 22l18-6-3 10-15 3z" fill="#fff" stroke="#9cc998" />
        <path d="M14 24l12-4M14 27l12-4M18 22v5M22 20v6" stroke="#8fbd8b" />
      </>
    ),
  },
];

const Taskbar = () => (
  <nav className="flex h-[39px] shrink-0 items-center bg-[linear-gradient(100deg,#a9a9a9_0,#b4b4b4_50px,#dedede_80px,#e9e9e9_40%,#dcdcdc_50%,#e8e8e8_62%,#e4e4e4_calc(100%-225px),#b2b2b2_calc(100%-190px),#a8a8a8_100%)]">
    <button type="button" aria-label="Пуск" className="flex w-[58px] shrink-0 justify-center pr-1">
      <svg width="38" height="38" viewBox="0 0 38 38">
        <circle cx="19" cy="19" r="17.500" fill="#2f6489" stroke="#294a63" />
        <path d="M3 15C5 6 12 3 19 3s14 3 16 12c-8-5-24-5-32 0z" fill="#8db4cc" />
        <circle cx="19" cy="19" r="12" fill="#4b8fb8" opacity=".6" />
        <path d="M11 11c3-1.500 5-1.500 7.500 0l-1.500 7c-2.500-1.500-5-1.500-7.500 0z" fill="#ef6a32" />
        <path d="M20 11.500c3 1.500 5 1.500 8 0l-2 7c-2.500 1.500-5 1.500-7.500 0z" fill="#8cc63f" />
        <path d="M9 20c3-1.500 5-1.500 7.500 0l-1.500 7c-2.500-1.500-5-1.500-7.500 0z" fill="#3fa0e0" />
        <path d="M18 20.500c3 1.500 5 1.500 8 0l-2 7c-2.500 1.500-5 1.500-7.500 0z" fill="#fccf3a" />
      </svg>
    </button>
    {taskIcons.map(task => (
      <button
        key={task.name}
        type="button"
        aria-label={task.name}
        className={clsx(
          'flex h-[39px] w-[62px] shrink-0 items-center justify-center',
          task.framed && 'rounded-[3px] border border-[#888] bg-gradient-to-b from-[#fafafa] to-[#e2e2e2]',
        )}
      >
        <svg width="32" height="32" viewBox="0 0 32 32">{task.icon}</svg>
      </button>
    ))}
    <div className="ml-auto flex items-center text-[11px] text-white">
      <span className="text-xs text-[#f3f3f3]">RU</span>
      <button type="button" aria-label="Скрытые значки" className="ml-4">
        <svg width="9" height="6" viewBox="0 0 9 6"><path d="M.5 5.500h8L4.500 1z" fill="#fff" stroke="#666" /></svg>
      </button>
      <button type="button" aria-label="Громкость" className="ml-3">
        <svg width="17" height="16" viewBox="0 0 17 16">
          <path d="M1 5h3l4-4v14l-4-4H1z" fill="#fff" stroke="#444" />
          <path d="M10 5c1.500 2 1.500 4 0 6M12 3c3 3 3 7 0 10M14.500 1.500c3 4 3 9 0 13" fill="none" stroke="#fff" strokeWidth="1.300" />
        </svg>
      </button>
      <button type="button" aria-label="Питание" className="ml-2">
        <svg width="16" height="16" viewBox="0 0 16 16">
          <path d="M1 2h7v13H1zM3 .5h3V2H3z" fill="#fff" stroke="#333" />
          <path d="M8 5h6v4c0 2-1.500 3-3 3S8 11 8 9zM9.500 2v3M12.500 2v3M11 12v2.500H7" fill="#fff" stroke="#333" />
        </svg>
      </button>
      <div className="ml-2 flex w-[74px] flex-col items-center leading-[17px]">
        <span>10:22</span>
        <span>12.02.2015</span>
      </div>
      <button type="button" aria-label="Показать рабочий стол" className="h-[39px] w-[15px] border border-[#8a8a8a] bg-gradient-to-b from-[#d4d4d4] to-[#a4a4a4]" />
    </div>
  </nav>
);

export default function App() {
  return (
    <div className="flex h-screen w-full flex-col overflow-hidden bg-white font-['Open_Sans','Noto_Sans',sans-serif] text-xs">
      <div className="shrink-0 bg-[linear-gradient(180deg,rgba(255,255,255,0.1),#fff),linear-gradient(60deg,#ececec_0,#e6e6e6_20%,#f4f4f4_35%,#dcdcdc_52%,#eeeeee_68%,#d8d8d8_75%,#f0f0f0_86%,#e0e0e0_100%)]">
        <TitleBar />
        <RibbonTabs />
      </div>
      <Ribbon />
      <FormulaBar />
      <BookTabs />
      <main className="flex min-h-0 flex-1">
        <div className="min-w-0 flex-1 overflow-hidden">
          <Sheet />
        </div>
        <VerticalScroll />
      </main>
      <SheetTabs />
      <StatusBar />
      <Taskbar />
    </div>
  );
}
